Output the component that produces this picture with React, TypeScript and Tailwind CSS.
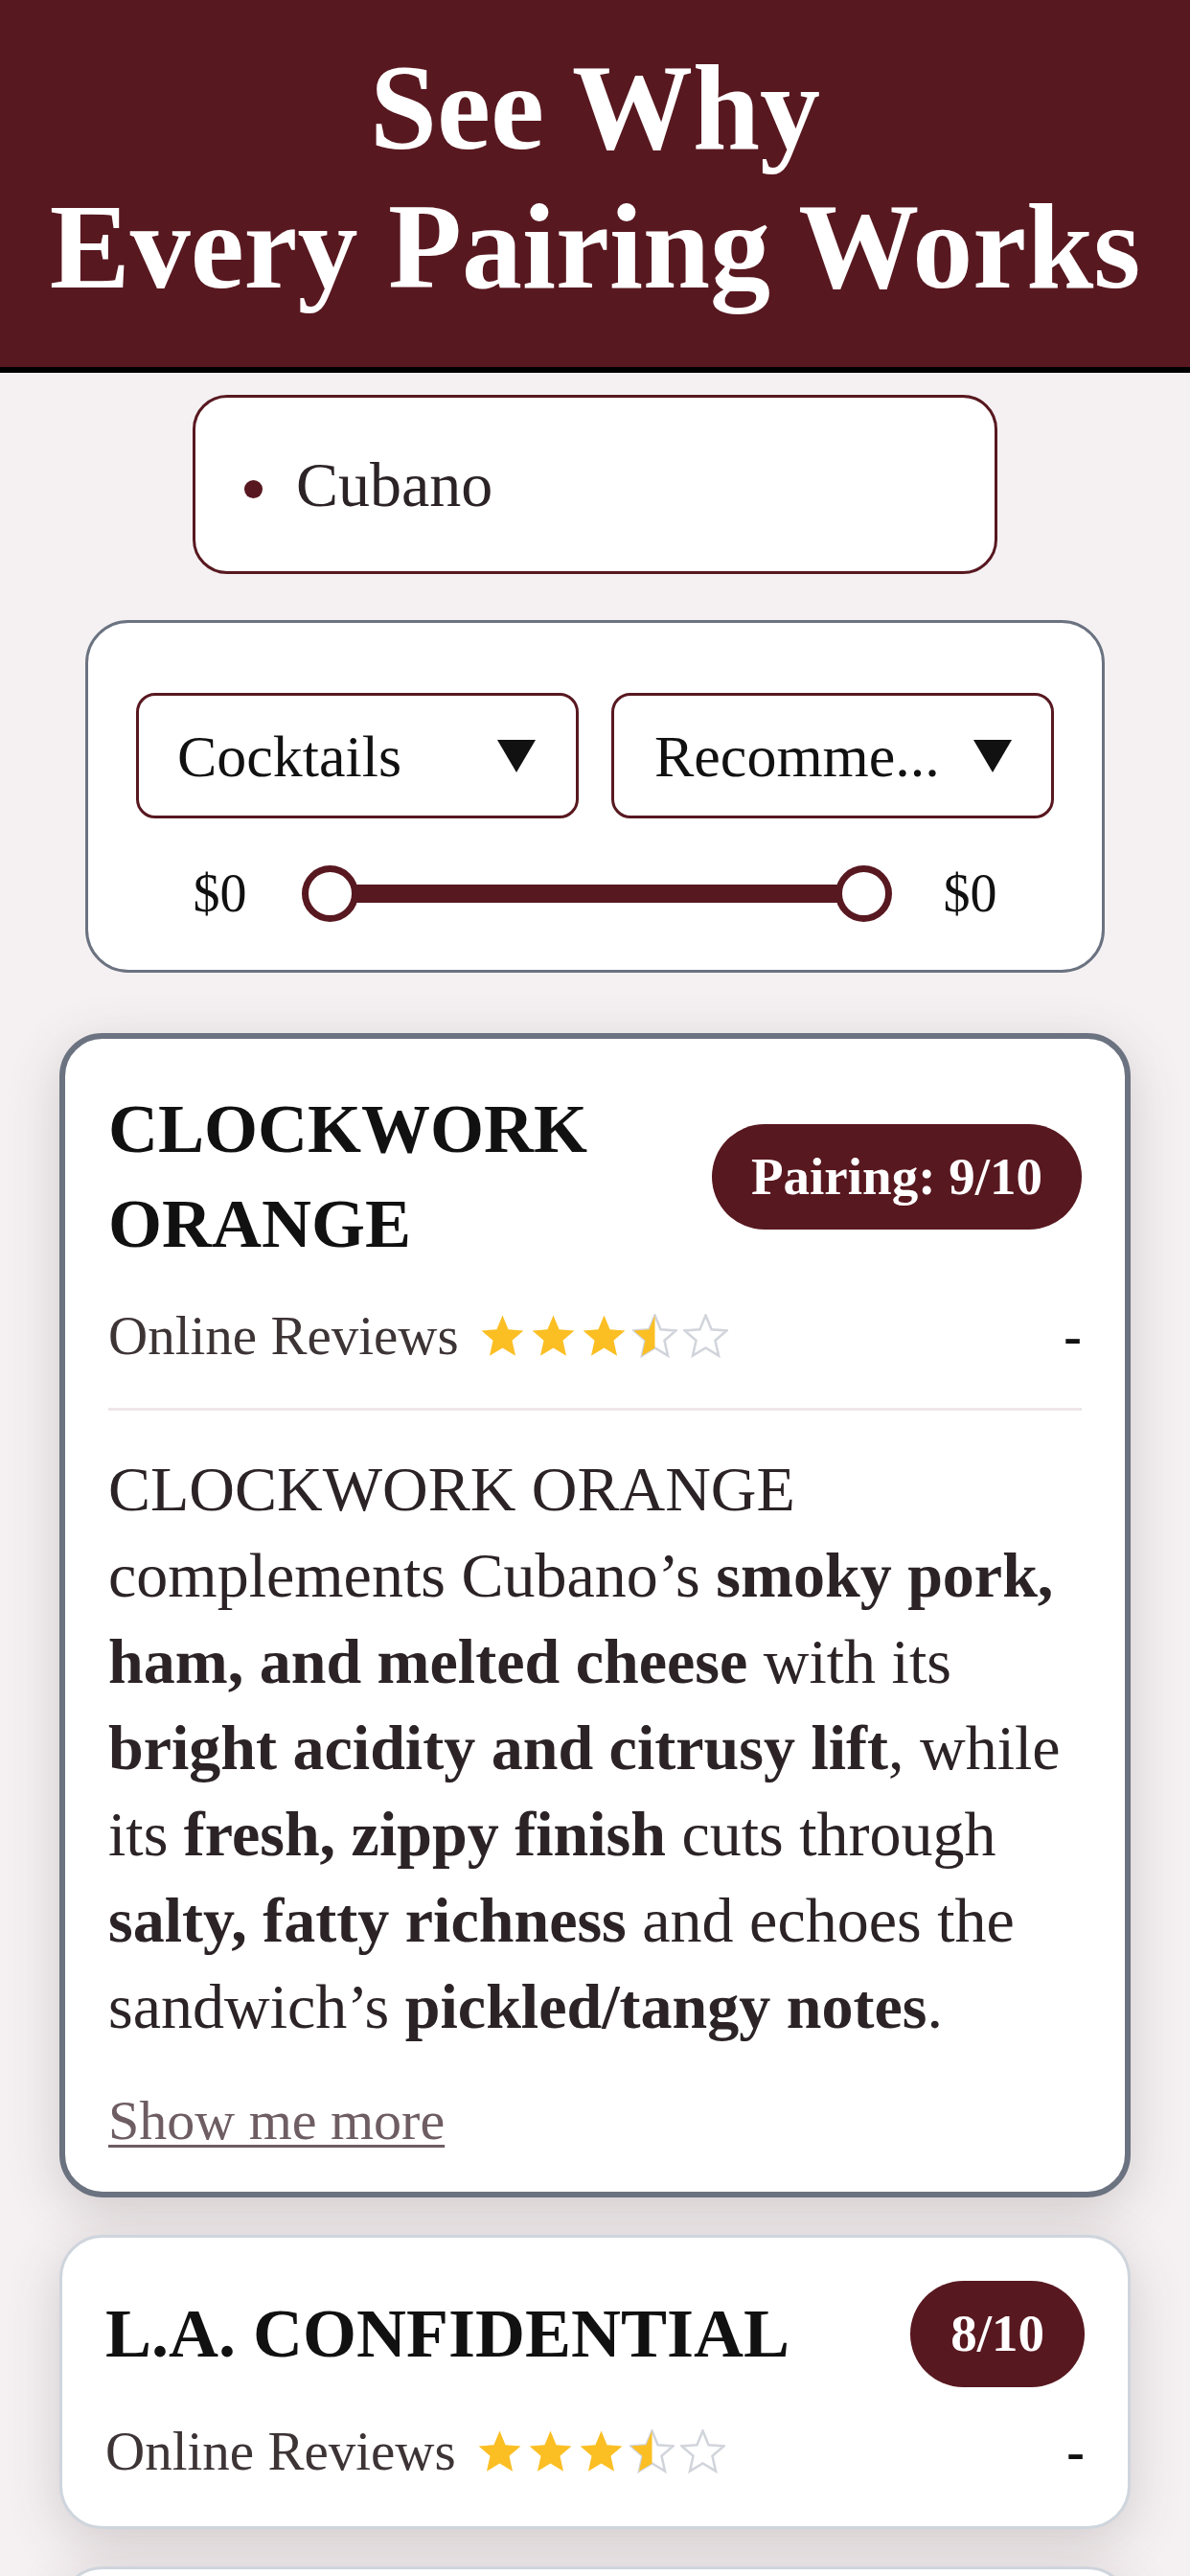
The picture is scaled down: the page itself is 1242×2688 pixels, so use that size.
import React from "react";

function Star({ fill }: { fill: "full" | "half" | "empty" }) {
  const pts = "12,0.8 15.1,8.3 23.2,8.9 17.1,14.2 18.9,22.3 12,18.1 5.1,22.3 6.9,14.2 0.8,8.9 8.9,8.3";
  const id = React.useId().replace(/:/g, "");
  return (
    <svg width="47" height="47" viewBox="0 0 24 24" className="block">
      {fill === "full" && <polygon points={pts} fill="#fbbf24" />}
      {fill === "empty" && (
        <polygon points={pts} fill="none" stroke="#d1d5db" strokeWidth="1.3" />
      )}
      {fill === "half" && (
        <>
          <defs>
            <clipPath id={`h${id}`}>
              <rect x="0" y="0" width="12" height="24" />
            </clipPath>
          </defs>
          <polygon points={pts} fill="none" stroke="#d1d5db" strokeWidth="1.3" />
          <polygon points={pts} fill="#fbbf24" clipPath={`url(#h${id})`} />
        </>
      )}
    </svg>
  );
}

function Stars() {
  return (
    <div className="flex items-center gap-[6px]">
      <Star fill="full" />
      <Star fill="full" />
      <Star fill="full" />
      <Star fill="half" />
      <Star fill="empty" />
    </div>
  );
}

function ReviewsRow() {
  return (
    <div className="mt-[25px] flex items-center justify-between">
      <div className="flex items-center gap-[22px]">
        <span className="text-[57px] leading-[84px] text-[#3d3436]">Online Reviews</span>
        <Stars />
      </div>
      <span className="text-[56px] leading-[84px] font-bold text-[#111111]">-</span>
    </div>
  );
}

function Triangle() {
  return (
    <svg width="40" height="34" viewBox="0 0 40 34" className="block shrink-0">
      <polygon points="0,0 40,0 20,34" fill="#111111" />
    </svg>
  );
}

const cardShadow = "shadow-[0_14px_56px_rgba(70,50,55,0.2)]";

export default function App() {
  return (
    <div className="h-[2688px] overflow-hidden bg-[#f5f1f2] font-['Liberation_Serif','Times_New_Roman',serif]">
      {/* Header */}
      <header className="h-[389px] bg-[#581820] border-b-[6px] border-black pt-[40px] text-center">
        <h1 className="text-[126px] leading-[145px] font-bold text-white">
          See Why
          <br />
          Every Pairing Works
        </h1>
      </header>

      {/* Selected dish */}
      <div className="mx-auto mt-[23px] flex h-[187px] w-[840px] items-center rounded-[36px] border-[3px] border-[#581820] bg-white pl-[51px]">
        <span className="mt-[10px] h-[19px] w-[19px] shrink-0 rounded-full bg-[#581820]" />
        <span className="ml-[35px] text-[66px] leading-[80px] text-[#2b2326]">Cubano</span>
      </div>

      {/* Filters */}
      <div className="mx-auto mt-[48px] h-[368px] w-[1064px] rounded-[45px] border-[3px] border-[#6b7280] bg-white px-[50px] pt-[73px]">
        <div className="grid grid-cols-2 gap-[34px]">
          <div className="flex h-[131px] items-center justify-between rounded-[20px] border-[3px] border-[#581820] pl-[40px] pr-[42px]">
            <span className="text-[62px] leading-[80px] text-[#111111]">Cocktails</span>
            <Triangle />
          </div>
          <div className="flex h-[131px] items-center justify-between rounded-[20px] border-[3px] border-[#581820] pl-[42px] pr-[41px]">
            <span className="text-[62px] leading-[80px] text-[#111111]">Recomme...</span>
            <Triangle />
          </div>
        </div>
        <div className="mt-[48px] flex items-center justify-center">
          <span className="w-[56px] text-[56px] leading-[60px] text-[#111111]">$0</span>
          <div className="relative ml-[57px] h-[59px] w-[616px]">
            <div className="absolute left-[29px] right-[29px] top-[20px] h-[19px] bg-[#581820]" />
            <div className="absolute left-0 top-0 h-[59px] w-[59px] rounded-full border-[7px] border-[#581820] bg-white" />
            <div className="absolute right-0 top-0 h-[59px] w-[59px] rounded-full border-[7px] border-[#581820] bg-white" />
          </div>
          <span className="ml-[54px] w-[56px] text-[56px] leading-[60px] text-[#111111]">$0</span>
        </div>
      </div>

      {/* Cards */}
      <div className="mx-[62px] mt-[63px] flex flex-col gap-[39px]">
        <div className={`rounded-[45px] border-[6px] border-[#6b7280] bg-white px-[45px] pt-[45px] pb-[32px] ${cardShadow}`}>
          <div className="flex items-center justify-between gap-[40px]">
            <h2 className="text-[72px] leading-[99px] font-bold text-[#111111]">
              CLOCKWORK
              <br />
              ORANGE
            </h2>
            <span className="flex h-[110px] shrink-0 items-center rounded-full bg-[#581820] px-[41px] text-[55px] font-bold text-white">
              Pairing: 9/10
            </span>
          </div>
          <ReviewsRow />
          <div className="mt-[33px] h-[3px] bg-[#ede7e9]" />
          <p className="mt-[37px] text-[66px] leading-[90px] text-[#2b2326]">
            CLOCKWORK ORANGE
            <br />
            complements Cubano’s <b className="font-bold">smoky pork,</b>
            <br />
            <b className="font-bold">ham, and melted cheese</b> with its
            <br />
            <b className="font-bold">bright acidity and citrusy lift</b>, while
            <br />
            its <b className="font-bold">fresh, zippy finish</b> cuts through
            <br />
            <b className="font-bold">salty, fatty richness</b> and echoes the
            <br />
            sandwich’s <b className="font-bold">pickled/tangy notes</b>.
          </p>
          <div className="mt-[32px]">
            <span className="text-[58px] leading-[84px] text-[#6e5d63] underline decoration-[3px] underline-offset-[6px]">
              Show me more
            </span>
          </div>
        </div>

        <div className={`rounded-[45px] border-[3px] border-[#cfd5dd] bg-white px-[45px] pt-[45px] pb-[36px] ${cardShadow}`}>
          <div className="flex items-center justify-between gap-[40px]">
            <h2 className="text-[72px] leading-[99px] font-bold text-[#111111]">L.A. CONFIDENTIAL</h2>
            <span className="flex h-[111px] shrink-0 items-center rounded-full bg-[#581820] px-[42px] text-[55px] font-bold text-white">
              8/10
            </span>
          </div>
          <ReviewsRow />
        </div>

        <div className={`h-[300px] rounded-[45px] border-[3px] border-[#cfd5dd] bg-white ${cardShadow}`} />
      </div>
    </div>
  );
}
